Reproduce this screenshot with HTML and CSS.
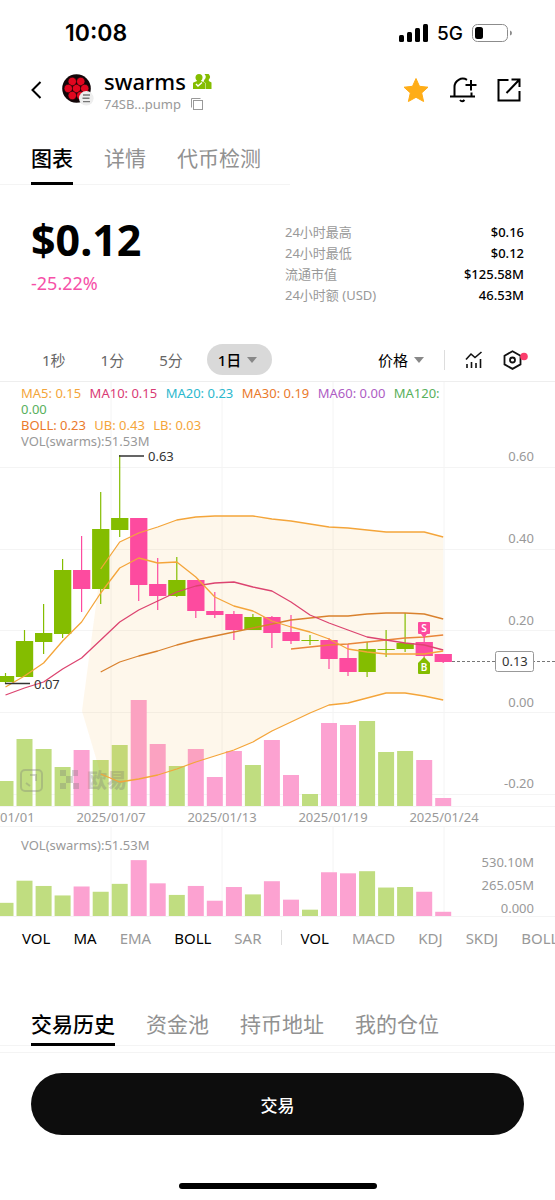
FILE: index.html
```html
<!DOCTYPE html>
<html lang="zh-CN">
<head>
    <meta charset="UTF-8">
    <meta name="viewport" content="width=device-width, initial-scale=1.0">
    <title>swarms</title>
    <link rel="stylesheet" href="styles.css">
</head>
<body>
    <div class="status-bar">
        <span class="time">10:08</span>
        <div class="status-icons">
            <svg width="29" height="18" viewBox="0 0 29 18">
                <rect x="0" y="11" width="5" height="7" rx="1.5"/>
                <rect x="8" y="8" width="5" height="10" rx="1.5"/>
                <rect x="16" y="4" width="5" height="14" rx="1.5"/>
                <rect x="24" y="0" width="5" height="18" rx="1.5"/>
            </svg>
            <span class="network">5G</span>
            <svg width="41" height="18" viewBox="0 0 41 18">
                <rect x="0.5" y="0.5" width="35" height="17" rx="5" fill="none" stroke="#8c8c8c"/>
                <rect x="3" y="3" width="8" height="12" rx="2.5"/>
                <path d="M38 6.5q2 .5 2 2.500t-2 2.500z" fill="#8c8c8c"/>
            </svg>
        </div>
    </div>

    <header class="header">
        <button class="icon-btn" aria-label="返回">
            <svg width="12" height="18" viewBox="0 0 12 18" fill="none" stroke="#000" stroke-width="2"><path d="M9.500 1 1.500 9l8 8"/></svg>
        </button>
        <svg class="logo" width="32" height="32" viewBox="0 0 32 32">
            <circle cx="14.500" cy="14.500" r="14.300" fill="#120608"/>
            <g fill="#e2061f" stroke="#120608" stroke-width="0.600">
                <circle cx="14.500" cy="14.500" r="4.200"/>
                <circle cx="10.300" cy="7.500" r="4.200"/>
                <circle cx="18.700" cy="7.500" r="4.200"/>
                <circle cx="6.300" cy="14.500" r="4.200"/>
                <circle cx="22.700" cy="14.500" r="4.200"/>
                <circle cx="10.300" cy="21.500" r="4.200"/>
                <circle cx="18.700" cy="21.500" r="4.200"/>
            </g>
            <circle cx="24.300" cy="24.300" r="7.300" fill="#eee"/>
            <path d="M21 21h7M20.500 24.300h7M21 27.600h7" stroke="#777" stroke-width="1.400"/>
        </svg>
        <div class="token">
            <div class="token-name">
                <h1>swarms</h1>
                <svg width="19" height="15" viewBox="0 0 19 15" fill="#84bd00">
                    <path d="M11.500 0a3.500 3.500 0 0 1 4.300 5.500V7l2.700 1.500V15h-6V9l-2-1.500 1-2A4 4 0 0 0 11.500 0z"/>
                    <circle cx="6" cy="3.500" r="3.500"/>
                    <path d="M4 5h4v2l4 1.700V15H0V8.700L4 7z"/>
                    <path d="m3 10 2 2 4-3.500" fill="none" stroke="#fff" stroke-width="1.400"/>
                </svg>
            </div>
            <div class="token-address">
                <span>74SB...pump</span>
                <svg width="12" height="12" viewBox="0 0 12 12" fill="none" stroke="#999"><path d="M.5 9.500v-9h9"/><rect x="2.500" y="2.500" width="9" height="9"/></svg>
            </div>
        </div>
        <div class="actions">
            <button class="icon-btn" aria-label="收藏">
                <svg width="26" height="26" viewBox="0 0 26 26"><path d="m13 1.500 3.500 7.800 8.500.9-6.300 5.700 1.900 8.600-7.600-4.200-7.600 4.200 1.900-8.600L1 10.200l8.500-.9z" fill="#ffad17" stroke="#ffad17" stroke-linejoin="round"/></svg>
            </button>
            <button class="icon-btn" aria-label="提醒">
                <svg width="28" height="26" viewBox="0 0 28 26" fill="none" stroke="#000" stroke-width="2">
                    <path d="M18 2.800A8.300 8.300 0 0 0 5.500 10v9.500M1 19.500h25M22.500 15.500v4M11 23q2 2.500 4.500 0M22 3v10.500M16.500 8h11"/>
                </svg>
            </button>
            <button class="icon-btn" aria-label="分享">
                <svg width="24" height="24" viewBox="0 0 24 24" fill="none" stroke="#000" stroke-width="2">
                    <path d="M11.500 2H1.500v20.500h21V13M9.500 15 22 2M14.500 1.500h8V9"/>
                </svg>
            </button>
        </div>
    </header>

    <nav class="tabs top-tabs">
        <a class="active" href="#chart">图表</a>
        <a href="#detail">详情</a>
        <a href="#check">代币检测</a>
    </nav>

    <section class="summary">
        <div>
            <div class="price">$0.12</div>
            <div class="change">-25.22%</div>
        </div>
        <dl class="stats">
            <dt>24小时最高</dt><dd>$0.16</dd>
            <dt>24小时最低</dt><dd>$0.12</dd>
            <dt>流通市值</dt><dd>$125.58M</dd>
            <dt>24小时额 (USD)</dt><dd>46.53M</dd>
        </dl>
    </section>

    <div class="toolbar">
        <div class="periods">
            <button>1秒</button>
            <button>1分</button>
            <button>5分</button>
            <label class="dropdown pill"><select aria-label="周期"><option>1日</option></select></label>
        </div>
        <div class="tools">
            <label class="dropdown"><select aria-label="类型"><option>价格</option></select></label>
            <span class="divider"></span>
            <button class="icon-btn" aria-label="指标">
                <svg width="18" height="18" viewBox="0 0 18 18" fill="none" stroke="#111" stroke-width="1.600"><path d="M1 8.500 6 3l4 3.500L16.500 1M2 13v4M6.500 11v6M11 12v5M15.500 8v9"/></svg>
            </button>
            <button class="icon-btn" aria-label="设置">
                <svg width="25" height="20" viewBox="0 0 25 20" fill="none" stroke="#111" stroke-width="1.800"><path d="m9.500 1.200 8 4.500v8.700l-8 4.500-8-4.500V5.700z"/><circle cx="9.500" cy="10" r="2.500"/><circle cx="21" cy="6.500" r="3.800" fill="#fb3d6c" stroke="none"/></svg>
            </button>
        </div>
    </div>

    <section class="chart" id="chart">
        <div class="legend">
            <div>
                <span class="ma5">MA5: 0.15</span>
                <span class="ma10">MA10: 0.15</span>
                <span class="ma20">MA20: 0.23</span>
                <span class="ma30">MA30: 0.19</span>
                <span class="ma60">MA60: 0.00</span>
                <span class="ma120">MA120:</span>
                <span class="ma120">0.00</span>
            </div>
            <div>
                <span class="ma30">BOLL: 0.23</span>
                <span class="ma5">UB: 0.43</span>
                <span class="ma5">LB: 0.03</span>
            </div>
            <div class="vol-label">VOL(swarms):51.53M</div>
        </div>
        <svg class="plot" viewBox="0 0 555 445">
            <path class="grid" d="M0 85.500h555M0 167.500h555M0 248.500h555M0 330.500h555M0 412.500h555M0 424.500h555M0 444.500h555M111 0v424M222 0v424M333 0v424M444 0v424"/>
            <g id="volume"></g>
            <g class="watermark">
                <rect x="21" y="388" width="21" height="21" rx="4"/>
                <path d="M30 393h6v6M26 401l4 3"/>
                <path class="mark" d="M60 388h6v6h-6zM72 388h6v6h-6zM66 394h7v7h-7zM60 401h6v6h-6zM73 401h6v6h-6z"/>
                <text x="87" y="406">欧易</text>
            </g>
            <path id="band" class="band"/>
            <g id="candles"></g>
            <g id="lines" class="lines"></g>
            <path class="leader" d="M119 74h25M5 301.500h25"/>
            <text class="extreme" x="148" y="79">0.63</text>
            <text class="extreme" x="34" y="307">0.07</text>
            <path class="last" d="M452 279.500h103"/>
            <rect class="last-box" x="495.500" y="269.500" width="38" height="20" rx="2"/>
            <text class="extreme" x="502" y="284">0.13</text>
            <path d="M419 240h10q1 0 1 1v10q0 1-1 1h-2l-3 4-3-4h-2q-1 0-1-1v-10q0-1 1-1z" fill="#fd4b9f"/>
            <path d="M419 292h10q1 0 1-1v-10l-6-6-6 6v10q0 1 1 1z" fill="#84bd00"/>
            <text class="tag" x="424" y="250">S</text>
            <text class="tag" x="424" y="289">B</text>
            <g class="axis end">
                <text x="534" y="79">0.60</text>
                <text x="534" y="161">0.40</text>
                <text x="534" y="243">0.20</text>
                <text x="534" y="325">0.00</text>
                <text x="534" y="406">-0.20</text>
            </g>
            <g class="axis middle">
                <text x="0" y="440">2025/01/01</text>
                <text x="111" y="440">2025/01/07</text>
                <text x="222" y="440">2025/01/13</text>
                <text x="333" y="440">2025/01/19</text>
                <text x="444" y="440">2025/01/24</text>
            </g>
        </svg>
        <svg class="plot" viewBox="0 0 555 90">
            <path class="grid" d="M0 89.500h555M111 0v89M222 0v89M333 0v89M444 0v89"/>
            <g id="subVolume"></g>
            <text class="axis" x="21" y="23">VOL(swarms):51.53M</text>
            <g class="axis end">
                <text x="534" y="40">530.10M</text>
                <text x="534" y="63">265.05M</text>
                <text x="534" y="86">0.000</text>
            </g>
        </svg>
    </section>

    <div class="indicators">
        <button class="on">VOL</button>
        <button class="on">MA</button>
        <button>EMA</button>
        <button class="on">BOLL</button>
        <button>SAR</button>
        <span class="divider"></span>
        <button class="on">VOL</button>
        <button>MACD</button>
        <button>KDJ</button>
        <button>SKDJ</button>
        <button>BOLL</button>
    </div>

    <nav class="tabs bottom-tabs">
        <a class="active" href="#history">交易历史</a>
        <a href="#pool">资金池</a>
        <a href="#holders">持币地址</a>
        <a href="#position">我的仓位</a>
    </nav>

    <footer class="footer">
        <button class="trade">交易</button>
        <div class="home-indicator"></div>
    </footer>

    <script>
        // high, body top, body bottom, low, rising (1) or falling (0), volume
        const days = [
            [291, 294, 300, 302, 1, 25],
            [248, 259, 295, 295, 1, 67],
            [222, 251, 260, 272, 1, 57],
            [177, 188, 252, 256, 1, 39],
            [154, 188, 207, 230, 0, 56],
            [110, 147, 207, 222, 1, 46],
            [73, 136, 148, 155, 1, 61],
            [136, 136, 203, 219, 0, 106],
            [176, 202, 214, 228, 0, 62],
            [175, 198, 214, 215, 1, 40],
            [198, 198, 229, 236, 0, 57],
            [210, 229, 233, 236, 0, 29],
            [229, 232, 248, 258, 0, 55],
            [232, 235, 248, 248, 1, 41],
            [234, 235, 251, 266, 0, 66],
            [233, 250, 259, 262, 0, 31],
            [253, 258, 259, 263, 1, 12],
            [256, 258, 277, 287, 0, 83],
            [262, 276, 290, 294, 0, 81],
            [260, 267, 290, 295, 1, 85],
            [248, 267, 268, 275, 1, 54],
            [231, 261, 267, 270, 1, 55],
            [255, 260, 274, 278, 0, 46],
            [272, 272, 280, 281, 0, 8]
        ];

        const lines = {
            middle: [5, 290, 280, 274, 269, 263, 258, 254, 250, 246, 242, 238, 236, 234, 234, 232, 231, 231, 232, 237],
            ma30: [15, 267, 265, 263, 262, 260, 258, 256, 255, 253],
            ma10: [0, 313, 306, 300, 287, 276, 258, 240, 228, 219, 210, 204, 201, 200, 205, 209, 220, 233, 241, 248, 255, 258, 261, 263, 268],
            ma5: [0, 305, 294, 281, 259, 240, 211, 186, 176, 181, 180, 195, 215, 224, 229, 239, 245, 250, 257, 267, 270, 272, 272, 272, 269],
            upper: [5, 187, 160, 151, 145, 138, 135, 134, 134, 134, 137, 139, 142, 145, 146, 148, 150, 150, 150, 155],
            lower: [5, 392, 400, 397, 393, 387, 380, 374, 368, 360, 349, 340, 331, 323, 321, 316, 311, 311, 314, 318]
        };

        const centre = i => Math.round((5.5 + i * 19.03) * 10) / 10;
        const points = ([start, ...ys]) => ys.map((y, i) => `${centre(start + i)} ${y}`);

        function volumeBars(bottom, scale) {
            return days.map((d, i) => {
                const h = d[5] * scale;
                return `<rect class="${d[4] ? 'vol-up' : 'vol-down'}" x="${centre(i) - 8}" y="${bottom - h}" width="16" height="${h}"/>`;
            }).join('');
        }

        document.getElementById('volume').innerHTML = volumeBars(424, 1);
        document.getElementById('subVolume').innerHTML = volumeBars(89, 0.527);

        document.getElementById('candles').innerHTML = days.map((d, i) => `
            <g class="${d[4] ? 'up' : 'down'}">
                <rect x="${centre(i) - 0.6}" y="${d[0]}" width="1.200" height="${d[3] - d[0]}"/>
                <rect x="${centre(i) - 8.6}" y="${d[1]}" width="17.300" height="${d[2] - d[1]}"/>
            </g>`).join('');

        document.getElementById('lines').innerHTML = Object.keys(lines).map(key =>
            `<path class="line-${key}" d="M${points(lines[key]).join('L')}"/>`).join('');

        document.getElementById('band').setAttribute('d',
            'M82 329L' + points(lines.upper).concat(points(lines.lower).reverse()).join('L') + 'z');
    </script>
</body>
</html>
```
FILE: styles.css
```css
* {
    box-sizing: border-box;
}
body {
    margin: 0;
    background-color: #fff;
    color: #000;
    font-family: "Noto Sans", "Noto Sans CJK SC", sans-serif;
    font-size: 15px;
}
button, select {
    padding: 0;
    border: none;
    background: none;
    color: inherit;
    font: inherit;
    cursor: pointer;
}
svg {
    display: block;
    flex-shrink: 0;
}
a {
    color: inherit;
    text-decoration: none;
}

/* status bar */
.status-bar {
    display: flex;
    justify-content: space-between;
    align-items: center;
    height: 66px;
    padding: 0 42px 0 65px;
    font-family: Inter, sans-serif;
}
.time {
    font-size: 23px;
    font-weight: 600;
}
.status-icons {
    display: flex;
    align-items: center;
    gap: 9px;
}
.network {
    font-size: 19px;
    font-weight: 500;
}

/* header */
.header {
    display: flex;
    align-items: center;
    height: 50px;
    padding: 0 34px 2px 31px;
}
.logo {
    margin-left: 19px;
}
.token {
    margin: 4px 0 0 10px;
}
.token-name {
    display: flex;
    align-items: center;
    gap: 7px;
    height: 24px;
}
.token-name h1 {
    margin: 0;
    font-size: 22px;
    line-height: 24px;
    font-weight: 500;
}
.token-address {
    display: flex;
    align-items: center;
    gap: 10px;
    height: 22px;
    color: #999;
    font-size: 13px;
}
.actions {
    display: flex;
    align-items: center;
    gap: 20px;
    margin-left: auto;
}

/* tabs */
.tabs {
    display: flex;
    gap: 31px;
    padding-left: 31px;
    color: #919191;
    font-size: 21px;
    line-height: 30px;
    white-space: nowrap;
    border-bottom: 1px solid #f4f4f4;
}
.tabs a {
    padding-bottom: 9px;
    margin-bottom: -1px;
    border-bottom: 3px solid transparent;
}
.tabs .active {
    color: #000;
    font-weight: 500;
    border-color: #000;
}
.top-tabs {
    width: 290px;
    margin-top: 27px;
}

/* price summary */
.summary {
    display: flex;
    justify-content: space-between;
    padding: 30px 31px 0;
}
.price {
    font-size: 43px;
    line-height: 50px;
    font-weight: 700;
}
.change {
    margin-top: 6px;
    color: #f650a8;
    font-size: 18px;
    line-height: 24px;
}
.stats {
    display: grid;
    grid-template-columns: 1fr auto;
    width: 239px;
    margin: 7px 0 0;
    color: #999;
    font-size: 13px;
    line-height: 21px;
}
.stats dd {
    margin: 0;
    color: #000;
    font-weight: 500;
    text-align: right;
}

/* toolbar */
.toolbar {
    display: flex;
    justify-content: space-between;
    align-items: center;
    height: 44px;
    margin-top: 32px;
    padding: 0 27px 0 42px;
    border-bottom: 1px solid #eee;
}
.periods, .tools {
    display: flex;
    align-items: center;
}
.periods {
    gap: 35px;
    color: #666;
}
.tools {
    gap: 20px;
}
.dropdown {
    display: flex;
    align-items: center;
    gap: 5px;
    color: #000;
}
.dropdown select {
    appearance: none;
    cursor: pointer;
}
.dropdown::after {
    content: "";
    border: 5px solid transparent;
    border-top: 6px solid #888;
    border-bottom: none;
}
.pill {
    height: 31px;
    margin-left: -11px;
    padding: 0 15px 0 11px;
    border-radius: 16px;
    background-color: #d9d9d9;
    font-weight: 500;
}
.divider {
    width: 1px;
    height: 20px;
    background-color: #ddd;
}

/* chart */
.chart {
    position: relative;
}
.legend {
    position: absolute;
    top: 3px;
    left: 21px;
    right: 105px;
    font-size: 13px;
    line-height: 16px;
}
.legend span {
    margin-right: 5px;
}
.vol-label {
    color: #999;
}
.ma5 { color: #f4a53a; }
.ma10 { color: #d93a75; }
.ma20 { color: #2cb8cd; }
.ma30 { color: #ea7a2b; }
.ma60 { color: #ae5dc4; }
.ma120 { color: #58b05c; }
.plot {
    width: 100%;
    height: auto;
}
.plot text {
    font-size: 13px;
}
.grid {
    fill: none;
    stroke: #f4f4f4;
}
.up { fill: #84bd00; }
.down { fill: #fd4b9f; }
.vol-up { fill: #c0dd80; }
.vol-down { fill: #fca2d1; }
.band {
    fill: #f5a623;
    fill-opacity: 0.09;
}
.lines {
    fill: none;
    stroke: #f4a53a;
    stroke-width: 1.3;
    stroke-linejoin: round;
}
.line-ma10 { stroke: #dc4470; }
.line-ma30 { stroke: #e9853a; }
.line-middle { stroke: #d9812d; }
.leader {
    stroke: #333;
    stroke-width: 1.5;
}
.extreme {
    fill: #333;
}
.last {
    stroke: #777;
    stroke-dasharray: 3 2;
}
.last-box {
    fill: #fff;
    stroke: #999;
}
.plot .tag {
    fill: #fff;
    font-size: 10px;
    font-weight: 600;
    text-anchor: middle;
}
.axis {
    fill: #999;
}
.end {
    text-anchor: end;
}
.middle {
    text-anchor: middle;
}
.watermark {
    fill: none;
    stroke: #777;
    stroke-width: 2;
    opacity: 0.3;
}
.watermark .mark, .watermark text {
    fill: #777;
    stroke: none;
}
.plot .watermark text {
    font-size: 20px;
    font-weight: 900;
}

/* indicator picker */
.indicators {
    display: flex;
    align-items: center;
    gap: 23px;
    height: 41px;
    padding-left: 22px;
    color: #999;
    white-space: nowrap;
    overflow: hidden;
}
.indicators button {
    flex-shrink: 0;
}
.indicators .on {
    color: #000;
}
.indicators .divider {
    height: 15px;
    margin: 0 -4px;
    flex-shrink: 0;
}

/* bottom */
.bottom-tabs {
    margin-top: 51px;
}
.bottom-tabs a {
    padding-bottom: 4px;
}
.footer {
    margin-top: 6px;
    padding: 20px 31px 10px;
    border-top: 1px solid #f4f4f4;
}
.trade {
    display: block;
    width: 100%;
    height: 62px;
    border-radius: 31px;
    background-color: #0d0d0d;
    color: #fff;
    font-size: 17px;
    font-weight: 500;
}
.home-indicator {
    width: 198px;
    height: 6px;
    margin: 48px auto 0;
    border-radius: 3px;
    background-color: #000;
}
```
